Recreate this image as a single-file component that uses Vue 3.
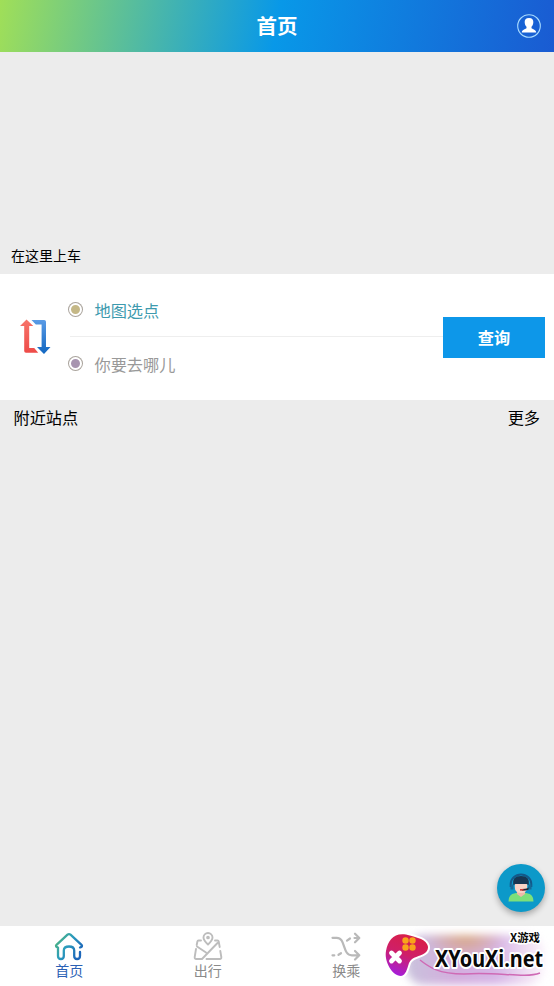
<script setup>
import { ref } from 'vue'

const active = ref('home')
const tabs = [
  { id: 'home', label: '首页' },
  { id: 'travel', label: '出行' },
  { id: 'transfer', label: '换乘' },
]
</script>

<template>
  <div class="page">
    <header class="bar">
      <h1>首页</h1>
      <svg class="avatar" width="26" height="26" viewBox="0 0 26 26">
        <circle cx="13" cy="13" r="11.3" fill="none" stroke="#a9dcff" stroke-width="1.1" />
        <path d="M13 5c-3.200 0-4.600 1.700-4.300 4.600.1 2 .8 3.200 1.800 4.200v1.400c-1.300 1-4.500 1.300-4.700 4.400h14.400c-.2-3.100-3.400-3.400-4.700-4.400v-1.400c1-1 1.700-2.200 1.800-4.200.3-2.900-1.100-4.600-4.300-4.600z" fill="#fff" />
      </svg>
    </header>

    <section class="board"><span>在这里上车</span></section>

    <section class="search">
      <svg class="swap" width="32" height="38" viewBox="0 0 32 38">
        <defs>
          <linearGradient id="swapRed" x1="0" y1="0" x2="0" y2="1">
            <stop offset="0" stop-color="#f7746a" /><stop offset="1" stop-color="#ee4b48" />
          </linearGradient>
          <linearGradient id="swapBlue" x1="0" y1="0" x2="0" y2="1">
            <stop offset="0" stop-color="#5a9be6" /><stop offset="1" stop-color="#1267c1" />
          </linearGradient>
        </defs>
        <path d="M6.500 1.500 13.300 8H9.200v22h5l4 4.700H6Q4.200 34.700 4.200 33V8H0z" fill="url(#swapRed)" />
        <path d="M11.500 2h12.600Q26 2 26 3.800V29h4.500L24 36l-7-7h4.600V6.400h-5.800z" fill="url(#swapBlue)" />
      </svg>
      <div class="fields">
        <div class="field start"><i class="dot"></i><span>地图选点</span></div>
        <div class="field end"><i class="dot"></i><span>你要去哪儿</span></div>
      </div>
      <button class="query">查询</button>
    </section>

    <section class="nearby"><span>附近站点</span><span>更多</span></section>

    <main class="list"></main>

    <nav class="tabs">
      <div v-for="t in tabs" :key="t.id" class="tab" :class="{ on: active === t.id }" @click="active = t.id">
        <svg v-if="t.id === 'home'" width="30" height="30" viewBox="0 0 30 30" fill="none">
          <defs>
            <linearGradient id="home" x1="0" y1="0" x2="1" y2=".6">
              <stop offset="0" stop-color="#57b96f" /><stop offset=".5" stop-color="#2b9dbc" /><stop offset="1" stop-color="#1d67ba" />
            </linearGradient>
          </defs>
          <path d="M26 15.500Q29 14.500 27.500 12.800L16.500 2.700Q15 1.500 13.500 2.700L2.500 12.800Q1 14.500 4 15.500V24q0 3 2.900 3t2.900-3v-5.500q0-4 5.200-4t5.200 4V24q0 3 2.900 3T26 24v-4" stroke="url(#home)" stroke-width="2.300" stroke-linecap="round" stroke-linejoin="round" />
        </svg>
        <svg v-else-if="t.id === 'travel'" width="30" height="30" viewBox="0 0 30 30" fill="none" stroke="#bdbdbd" stroke-width="1.900" stroke-linecap="round" stroke-linejoin="round">
          <path d="M15 12.500q-4.500-4.300-4.500-7a4.500 4.500 0 0 1 9 0q0 2.700-4.500 7z" />
          <circle cx="15" cy="5.500" r=".9" />
          <path d="M8 8.500H5.500Q4.600 8.500 4.400 9.500L3.700 13M3 17l-1.300 8q-.2 2 1.500 2H9L24.500 11M22 8.500h2.500q1 0 1.200 1L26.700 15M13.500 27h13.300q1.700 0 1.500-2L27.300 19M4 14.500l9 6" />
        </svg>
        <svg v-else width="30" height="30" viewBox="0 0 30 30" fill="none" stroke="#b9b9b9" stroke-width="2.200" stroke-linecap="round" stroke-linejoin="round">
          <path d="M1.500 5.800h4.300c9 0 5.500 17.500 15 17.500H28M24 19l4.300 4.300L24 27.500M24 1.700 28.300 6 24 10.300M27.500 6h-4M19 6.500l-3 2.200M1.500 23.300h1.800M7.500 22.800l2.500-1.600" />
        </svg>
        <span>{{ t.label }}</span>
      </div>
      <div class="tab"></div>
    </nav>

    <div class="service">
      <svg width="28" height="30" viewBox="0 0 28 30">
        <path d="M3.700 14V11a10.300 9.600 0 0 1 20.600 0v3" fill="none" stroke="#14598a" stroke-width="2" />
        <path d="M1.500 28.500q0-7.500 6.500-8.200l6-1.600 6 1.600q6.500.7 6.500 8.200z" fill="#7ce07a" />
        <path d="M10 17h8v4l-4 3-4-3z" fill="#f0b8a8" />
        <path d="M7.800 9h12.400v5q0 6-6.200 6T7.800 14z" fill="#f8d3c7" />
        <path d="M6.200 12.300Q4.700 3 14 3t7.800 9.300l-2.200-1.300H8.400z" fill="#183653" />
        <path d="M22.500 13.500q.5 3.300-7.500 3.400" fill="none" stroke="#202735" stroke-width="1.800" />
        <path d="M3.500 11.500h3v5h-3zM21.500 11.500h3v5h-3z" fill="#156b98" />
        <path d="M13 16h3.500v1.700H13z" fill="#c93838" />
      </svg>
    </div>

    <div class="brand">
      <div class="glow"></div>
      <svg width="174" height="60" viewBox="0 0 174 60">
        <defs>
          <linearGradient id="pad" x1=".7" y1="0" x2=".3" y2="1">
            <stop offset="0" stop-color="#d91f45" /><stop offset=".5" stop-color="#cf1f68" /><stop offset="1" stop-color="#a51edb" />
          </linearGradient>
        </defs>
        <path d="M40 34c9 7 18 14 44 14 32-3 60 5 76-1" fill="none" stroke="#cf6ab5" stroke-width="1.500" />
        <path d="M6 25C8 14 14 6.500 26 8.500 31 9.500 36 11 41 13c8 4 9 10 4 14-5 4-13 3-16 10-2 6-3 12-8 13-9 0-17-15-15-25z" fill="url(#pad)" stroke="#fff" stroke-width="4" paint-order="stroke" stroke-linejoin="round" />
        <g fill="#f9a51b"><circle cx="25.500" cy="14.500" r="3.200" /><circle cx="32.500" cy="14.500" r="3.200" /><circle cx="25.500" cy="21.500" r="3.200" /><circle cx="32.500" cy="21.500" r="3.200" /></g>
        <path d="m11.500 27 8 8m0-8-8 8" stroke="#fff" stroke-width="4.800" stroke-linecap="round" />
        <text class="small" x="130" y="15.500" textLength="30" lengthAdjust="spacingAndGlyphs">X游戏</text>
        <g transform="translate(55 40.500) scale(.82 1)">
          <text class="big" textLength="132" lengthAdjust="spacingAndGlyphs">XYouXi.net</text>
        </g>
      </svg>
    </div>
  </div>
</template>

<style>
body { margin: 0; }
</style>

<style scoped>
.page {
  position: relative;
  display: flex;
  flex-direction: column;
  height: 986px;
  overflow: hidden;
  background: #ececec;
  color: #111;
  font-family: "Noto Sans CJK SC", sans-serif;
}
.bar {
  display: grid;
  grid-template-columns: 1fr auto 1fr;
  align-items: center;
  flex: none;
  height: 52px;
  padding: 0 12px;
  background: linear-gradient(100deg, #a0df58 0%, #0898e8 50%, #1a5bd2 100%);
}
.bar h1 {
  grid-column: 2;
  margin: 0;
  padding-bottom: 2px;
  color: #fff;
  font-size: 20.5px;
  line-height: 50px;
  font-weight: 700;
}
.avatar { justify-self: end; }
.board {
  display: flex;
  align-items: flex-end;
  flex: none;
  height: 222px;
  box-sizing: border-box;
  padding: 0 11px 9px;
  font-size: 14px;
  line-height: 20px;
  color: #000;
}
.search {
  display: flex;
  align-items: center;
  flex: none;
  height: 126px;
  box-sizing: border-box;
  padding: 0 9px 0 20px;
  background: #fff;
}
.swap { flex: none; margin-right: 16px; }
.fields { flex: 1; padding-bottom: 1px; }
.field {
  display: flex;
  align-items: center;
  height: 53px;
  font-size: 16.2px;
  color: #999;
}
.start {
  margin-left: 2px;
  border-bottom: 1px solid #eee;
  color: #3d9aae;
}
.dot {
  width: 9px;
  height: 9px;
  margin: 0 12.5px 0 1px;
  border: 2px solid #fff;
  border-radius: 50%;
  box-shadow: 0 0 0 1px #aaa49d;
}
.start .dot { margin-left: -1px; background: #c5b887; }
.end .dot { background: #a895b0; }
.query {
  width: 102px;
  height: 41px;
  padding: 0;
  border: 0;
  color: #fff;
  background: #0d97e9;
  font: 700 16.2px/41px "Noto Sans CJK SC", sans-serif;
}
.nearby {
  display: flex;
  justify-content: space-between;
  flex: none;
  height: 36px;
  padding: 0 14px 0 13.5px;
  font-size: 16.2px;
  line-height: 34px;
  color: #000;
}
.list { flex: 1; }
.tabs {
  display: flex;
  flex: none;
  height: 60px;
  background: #fff;
}
.tab {
  display: flex;
  flex: 1;
  flex-direction: column;
  align-items: center;
  padding-top: 6px;
  font-size: 14px;
  line-height: 16px;
  color: #8a8a8a;
}
.tab.on { color: #2b61b5; }
.service {
  position: absolute;
  right: 9px;
  top: 864px;
  display: flex;
  align-items: center;
  justify-content: center;
  width: 48px;
  height: 48px;
  border-radius: 50%;
  background: #0c99c9;
  box-shadow: 0 3px 6px rgba(0, 0, 0, .3);
}
.brand {
  position: absolute;
  right: 0;
  bottom: 0;
  width: 174px;
  height: 60px;
}
.brand svg { position: relative; display: block; }
.glow {
  position: absolute;
  inset: 9px 10px 1px 26px;
  border-radius: 18px;
  background:
    radial-gradient(ellipse at 43% 0, rgba(216, 166, 120, .95), transparent 36%),
    linear-gradient(90deg, #c9c3dc, #d3aede 35%, #d6b4e6 65%, #f0dff3 88%, #fbf3fb);
  filter: blur(4px);
}
.big, .small {
  fill: #080808;
  stroke: #fff;
  paint-order: stroke;
  stroke-linejoin: round;
}
.big { font: 700 24px "Noto Sans", sans-serif; stroke-width: 4px; }
.small { font: 700 11px "Noto Sans CJK SC", sans-serif; stroke-width: 3px; }
</style>
